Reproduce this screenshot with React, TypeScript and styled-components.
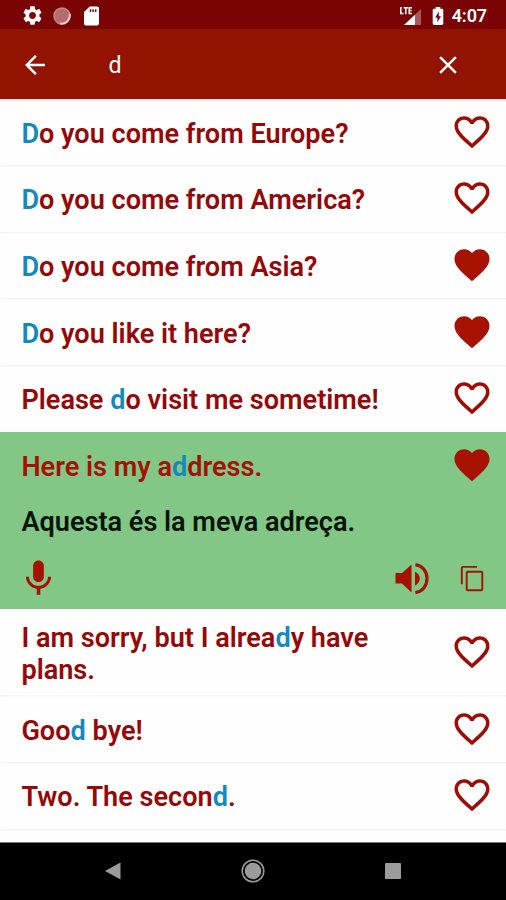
import React from "react";
import styled, { createGlobalStyle } from "styled-components";

const GlobalStyle = createGlobalStyle`
  * { box-sizing: border-box; }
  body { margin: 0; background: #fff; font-family: Roboto, "Liberation Sans", sans-serif; }
`;

const Screen = styled.div`
  width: 506px;
  height: 900px;
  display: flex;
  flex-direction: column;
  overflow: hidden;
  background: #fefefe;
`;

const StatusBar = styled.div`
  flex: none;
  height: 29px;
  padding: 2px 19px 0 21px;
  display: flex;
  align-items: center;
  background: #7a0404;
  color: #fff;
`;

const StatusIcons = styled.div`
  display: flex;
  align-items: center;
  gap: 8.5px;
`;

const StatusRight = styled.div`
  display: flex;
  align-items: center;
  margin-left: auto;
`;

const Clock = styled.span`
  margin-left: 8px;
  font-size: 18px;
  line-height: 20px;
  font-weight: 600;
  letter-spacing: -0.1px;
`;

const Battery = styled.svg`
  margin-left: 10px;
`;

const AppBar = styled.header`
  flex: none;
  height: 69.6px;
  padding: 2px 43px 0 20px;
  display: flex;
  align-items: center;
  background: #921400;
  color: #fff;
`;

const Query = styled.span`
  flex: 1;
  padding-top: 2px;
  margin-left: 58.5px;
  font-size: 23px;
  line-height: 28px;
`;

const BarButton = styled.button`
  display: flex;
  padding: 0;
  border: 0;
  background: none;
  color: inherit;
`;

const List = styled.main`
  flex: 1;
  min-height: 0;
  overflow: hidden;
  box-shadow: inset 0 3px 2px -1px #e6dfe6;
`;

const Row = styled.div<{ $tall?: boolean; $plain?: boolean }>`
  height: ${(p) => (p.$tall ? 86.2 : 66.6)}px;
  padding: 0 13px 0 21.4px;
  display: flex;
  align-items: center;
  justify-content: space-between;
  box-shadow: ${(p) => (p.$plain ? "none" : "0 1.5px 0 #f4f4f4")};
`;

const Phrase = styled.p<{ $dark?: boolean; $light?: boolean }>`
  margin: 0;
  padding-top: 4px;
  width: 400px;
  font-size: 27.1px;
  line-height: 32px;
  font-weight: 600;
  color: ${(p) => (p.$dark ? "#071407" : p.$light ? "#a31205" : "#960808")};
`;

const Line = styled.span`
  display: block;
`;

const Mark = styled.span`
  color: #1389bd;
`;

const Expanded = styled.section`
  height: 177.6px;
  background: #82c785;
`;

const Translation = styled.div`
  height: 43px;
  padding: 4px 21.4px 0;
`;

const Actions = styled.div`
  height: 68px;
  padding: 6px 19px 0 17px;
  display: flex;
  align-items: center;
  color: #a61200;
`;

const Sound = styled.svg`
  margin-left: auto;
`;

const Copy = styled.svg`
  margin-left: 28px;
`;

const NavBar = styled.nav`
  flex: none;
  height: 58px;
  padding-bottom: 2px;
  display: grid;
  grid-template-columns: 90px 46px 1fr 46px 90px;
  border-top: 1px solid #777;
  background: #000;
`;

const NavItem = styled.div<{ $col: number }>`
  grid-column: ${(p) => p.$col};
  display: flex;
  align-items: center;
  justify-content: center;
`;

const HEART_FILLED =
  "M12 21.35l-1.45-1.32C5.4 15.36 2 12.28 2 8.5 2 5.42 4.42 3 7.5 3c1.74 0 3.41.81 4.5 2.09C13.09 3.81 14.76 3 16.5 3 19.58 3 22 5.42 22 8.5c0 3.78-3.4 6.86-8.55 11.54L12 21.35z";
const HEART_OUTLINE =
  "M16.5 3c-1.74 0-3.41.81-4.5 2.09C10.91 3.81 9.24 3 7.5 3 4.42 3 2 5.42 2 8.5c0 3.78 3.4 6.86 8.55 11.54L12 21.35l1.45-1.32C18.6 15.36 22 12.28 22 8.5 22 5.42 19.58 3 16.5 3zm-4.4 15.55l-.1.1-.1-.1C7.14 14.24 4 11.39 4 8.5 4 6.5 5.5 5 7.5 5c1.54 0 3.04.99 3.57 2.36h1.87C13.46 5.99 14.96 5 16.5 5c2 0 3.5 1.5 3.5 3.5 0 2.89-3.14 5.74-7.9 10.05z";

function Heart({ filled }: { filled?: boolean }) {
  return (
    <svg width="42" height="42" viewBox="0 0 24 24" fill={filled ? "#a71100" : "#9f0c06"}>
      <path d={filled ? HEART_FILLED : HEART_OUTLINE} />
    </svg>
  );
}

// The segment between asterisks is the search match.
function Highlighted({ text }: { text: string }) {
  return (
    <>
      {text.split("\n").map((line) => (
        <Line key={line}>
          {line.split("*").map((part, i) => (i % 2 ? <Mark key={i}>{part}</Mark> : part))}
        </Line>
      ))}
    </>
  );
}

type Item = { text: string; liked?: boolean; tall?: boolean; plain?: boolean };

const before: Item[] = [
  { text: "*D*o you come from Europe?" },
  { text: "*D*o you come from America?" },
  { text: "*D*o you come from Asia?", liked: true },
  { text: "*D*o you like it here?", liked: true },
  { text: "Please *d*o visit me sometime!", plain: true },
];

const after: Item[] = [
  { text: "I am sorry, but I alrea*d*y have\nplans.", tall: true },
  { text: "Goo*d* bye!" },
  { text: "Two. The secon*d*." },
];

function PhraseRow({ item }: { item: Item }) {
  return (
    <Row $tall={item.tall} $plain={item.plain}>
      <Phrase>
        <Highlighted text={item.text} />
      </Phrase>
      <Heart filled={item.liked} />
    </Row>
  );
}

export default function App() {
  return (
    <Screen>
      <GlobalStyle />
      <StatusBar>
        <StatusIcons>
          <svg width="23" height="23" viewBox="0 0 24 24" fill="#fff">
            <path d="M19.14 12.94c.04-.3.06-.61.06-.94 0-.32-.02-.64-.07-.94l2.03-1.58c.18-.14.23-.41.12-.61l-1.92-3.32c-.12-.22-.37-.29-.59-.22l-2.39.96c-.5-.38-1.03-.7-1.62-.94l-.36-2.54c-.04-.24-.24-.41-.48-.41h-3.84c-.24 0-.43.17-.47.41l-.36 2.54c-.59.24-1.13.57-1.62.94l-2.39-.96c-.22-.08-.47 0-.59.22L2.74 8.87c-.12.21-.08.47.12.61l2.03 1.58c-.05.3-.09.63-.09.94s.02.64.07.94l-2.03 1.58c-.18.14-.23.41-.12.61l1.92 3.32c.12.22.37.29.59.22l2.39-.96c.5.38 1.03.7 1.62.94l.36 2.54c.05.24.24.41.48.41h3.84c.24 0 .44-.17.47-.41l.36-2.54c.59-.24 1.13-.56 1.62-.94l2.39.96c.22.08.47 0 .59-.22l1.92-3.32c.12-.22.07-.47-.12-.61l-2.01-1.58zM12 15.6c-1.98 0-3.6-1.62-3.6-3.6s1.62-3.6 3.6-3.6 3.6 1.62 3.6 3.6-1.62 3.6-3.6 3.6z" />
          </svg>
          <svg width="18" height="18" viewBox="0 0 18 18">
            <circle cx="9" cy="9" r="8" fill="#b56c6c" stroke="#c58b8a" strokeWidth="1.4" />
            <path d="M16.6 7a8 8 0 0 1-9.2 9.5" fill="none" stroke="#f3d8d3" strokeWidth="1.8" />
          </svg>
          <svg width="24" height="24" viewBox="0 0 24 24">
            <path d="M18.2 2.6h-7.5L5 8v11.6c0 1 .8 1.8 1.8 1.8h11.4c1 0 1.8-.8 1.8-1.8V4.4c0-1-.8-1.8-1.8-1.8z" fill="#fff" />
            <path d="M11.5 5.2v2.7M14.1 5.2v2.7M16.7 5.2v2.7" stroke="#7a0404" strokeWidth="1.5" />
          </svg>
        </StatusIcons>
        <StatusRight>
          <svg width="23" height="20" viewBox="0 0 23 20">
            <path d="M22 3v16H5z" fill="#a95a58" />
            <path d="M16 8.7V19H5z" fill="#fff" />
            <path d="M1.8 1v6.5h2.7M4.5 1.7H9M6.8 1.7v6.5M13 1.7h-2.8v5.8H13M10.2 4.6h2.4" fill="none" stroke="#fff" strokeWidth="1.5" />
          </svg>
          <Battery width="12" height="20" viewBox="0 0 12 20">
            <path d="M3.7 1h4.6v1.8h1.6c.8 0 1.4.6 1.4 1.4v13.4c0 .8-.6 1.4-1.4 1.4H2.1c-.8 0-1.4-.6-1.4-1.4V4.2c0-.8.6-1.4 1.4-1.4h1.6z" fill="#fff" />
            <path d="M6.8 5.6L3.2 11.4h2.2v4.8l3.6-6H6.8z" fill="#7a0404" />
          </Battery>
          <Clock>4:07</Clock>
        </StatusRight>
      </StatusBar>
      <AppBar>
        <BarButton aria-label="Back">
          <svg width="30" height="30" viewBox="0 0 24 24" fill="currentColor">
            <path d="M20 11H7.83l5.59-5.59L12 4l-8 8 8 8 1.41-1.41L7.83 13H20v-2z" />
          </svg>
        </BarButton>
        <Query>d</Query>
        <BarButton aria-label="Clear">
          <svg width="30" height="30" viewBox="0 0 24 24" fill="currentColor">
            <path d="M19 6.41L17.59 5 12 10.59 6.41 5 5 6.41 10.59 12 5 17.59 6.41 19 12 13.41 17.59 19 19 17.59 13.41 12z" />
          </svg>
        </BarButton>
      </AppBar>
      <List>
        {before.map((item) => (
          <PhraseRow key={item.text} item={item} />
        ))}
        <Expanded>
          <Row $plain>
            <Phrase $light>
              <Highlighted text="Here is my a*d*dress." />
            </Phrase>
            <Heart filled />
          </Row>
          <Translation>
            <Phrase $dark>Aquesta és la meva adreça.</Phrase>
          </Translation>
          <Actions>
            <svg width="43" height="43" viewBox="0 0 24 24" fill="currentColor">
              <path d="M12 14c1.66 0 2.99-1.34 2.99-3L15 5c0-1.66-1.34-3-3-3S9 3.34 9 5v6c0 1.66 1.34 3 3 3zm5.3-3c0 3-2.54 5.1-5.3 5.1S6.7 14 6.7 11H5c0 3.41 2.72 6.23 6 6.72V21h2v-3.28c3.28-.48 6-3.3 6-6.72h-1.7z" />
            </svg>
            <Sound width="35" height="34" viewBox="0 0 35 34" fill="currentColor">
              <path d="M1.5 12H8l9.5-8.5v28L8 22.500H1.500z" />
              <path d="M21 10.800c3 1.200 4.800 3.800 4.800 6.800s-1.800 5.600-4.800 6.800z" />
              <path d="M21.400 3.600C28.500 4.600 33 10.400 33 17.600S28.500 30.600 21.400 31.600" fill="none" stroke="currentColor" strokeWidth="3.200" />
            </Sound>
            <Copy width="30" height="30" viewBox="0 0 30 30" fill="none" stroke="currentColor" strokeWidth="1.9">
              <path d="M4.8 21.3V5.2q0-1.3 1.300-1.300H20" />
              <rect x="9.700" y="8.800" width="15.600" height="18.500" rx="1" />
            </Copy>
          </Actions>
        </Expanded>
        {after.map((item) => (
          <PhraseRow key={item.text} item={item} />
        ))}
      </List>
      <NavBar>
        <NavItem $col={2}>
          <svg width="18" height="20" viewBox="0 0 18 20">
            <path d="M1 10L16.5 1.5v17z" fill="#9b9b9b" />
          </svg>
        </NavItem>
        <NavItem $col={3}>
          <svg width="26" height="26" viewBox="0 0 26 26">
            <circle cx="13" cy="13" r="10.8" fill="none" stroke="#9b9b9b" strokeWidth="1.5" />
            <circle cx="13" cy="13" r="8.3" fill="#9b9b9b" />
          </svg>
        </NavItem>
        <NavItem $col={4}>
          <svg width="16" height="16" viewBox="0 0 16 16">
            <rect width="16" height="16" rx="1" fill="#9b9b9b" />
          </svg>
        </NavItem>
      </NavBar>
    </Screen>
  );
}
